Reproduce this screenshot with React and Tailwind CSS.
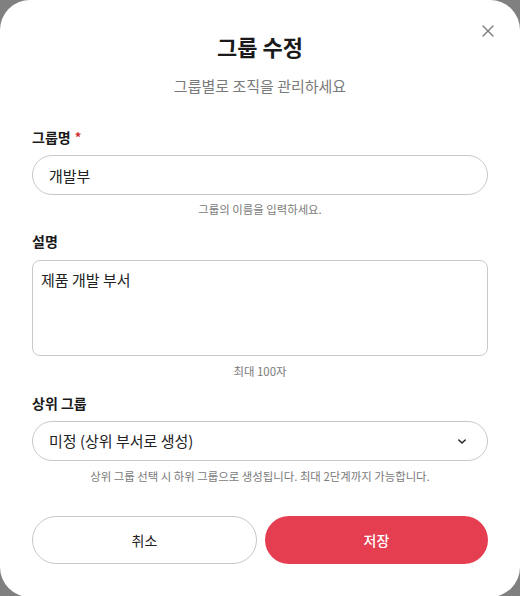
import { useState } from "react";

const font = { fontFamily: '"Noto Sans CJK KR", "Noto Sans", sans-serif' };

export default function App() {
  const [name, setName] = useState("개발부");
  const [desc, setDesc] = useState("제품 개발 부서");

  return (
    <div className="w-[520px] h-[596px] bg-[#808080] overflow-hidden" style={font}>
      <div className="relative w-full h-[597px] bg-white rounded-[30px] px-8 pt-[30px]">
        {/* Close */}
        <button className="absolute right-[26px] top-[25px] w-[12px] h-[12px] text-[#7a7a7a]">
          <svg viewBox="0 0 12 12" width="12" height="12" fill="none" stroke="currentColor" strokeWidth="1.4" strokeLinecap="round">
            <path d="M1 1L11 11M11 1L1 11" />
          </svg>
        </button>

        {/* Header */}
        <h2 className="text-center text-[22px] leading-[32px] font-bold text-[#1a1a1a]">그룹 수정</h2>
        <p className="mt-[14px] text-center text-[15px] leading-[20px] text-[#7a7a7a]">그룹별로 조직을 관리하세요</p>

        {/* 그룹명 */}
        <label className="mt-[31px] flex items-center gap-[4px] text-[14px] leading-[20px] font-bold text-[#1a1a1a]">
          그룹명 <span className="text-[#d32f2f] text-[13px]">*</span>
        </label>
        <input
          value={name}
          onChange={(e) => setName(e.target.value)}
          className="mt-2 w-full h-[40px] rounded-full border border-[#c8c8c8] pl-4 text-[15px] text-[#222] outline-none"
        />
        <p className="mt-[6px] text-center text-[11.4px] leading-[16px] text-[#7a7a7a]">그룹의 이름을 입력하세요.</p>

        {/* 설명 */}
        <label className="mt-[14px] block text-[14px] leading-[20px] font-bold text-[#1a1a1a]">설명</label>
        <textarea
          value={desc}
          onChange={(e) => setDesc(e.target.value)}
          className="mt-[9px] block w-full h-[96px] resize-none rounded-[8px] border border-[#c8c8c8] px-2 pt-[8px] text-[15px] leading-[22px] text-[#222] outline-none"
        />
        <p className="mt-[7px] text-center text-[11.4px] leading-[16px] text-[#7a7a7a]">최대 100자</p>

        {/* 상위 그룹 */}
        <label className="mt-[14px] block text-[14px] leading-[20px] font-bold text-[#1a1a1a]">상위 그룹</label>
        <div className="mt-2 flex items-center justify-between w-full h-[40px] rounded-full border border-[#c8c8c8] pl-4 pr-[21px]">
          <span className="text-[15px] text-[#222]">미정 (상위 부서로 생성)</span>
          <svg viewBox="0 0 10 6" width="8" height="5" fill="none" stroke="#222" strokeWidth="1.8" strokeLinecap="round" strokeLinejoin="round">
            <path d="M1 1L5 5L9 1" />
          </svg>
        </div>
        <p className="mt-[7px] text-center text-[11.4px] leading-[16px] text-[#7a7a7a]">
          상위 그룹 선택 시 하위 그룹으로 생성됩니다. 최대 2단계까지 가능합니다.
        </p>

        {/* Actions */}
        <div className="mt-8 flex gap-2">
          <button className="flex-1 h-[48px] rounded-full border border-[#c8c8c8] bg-white text-[14px] text-[#222]">취소</button>
          <button className="flex-1 h-[48px] rounded-full bg-[#e53e51] text-[14px] font-medium text-white">저장</button>
        </div>
      </div>
    </div>
  );
}
